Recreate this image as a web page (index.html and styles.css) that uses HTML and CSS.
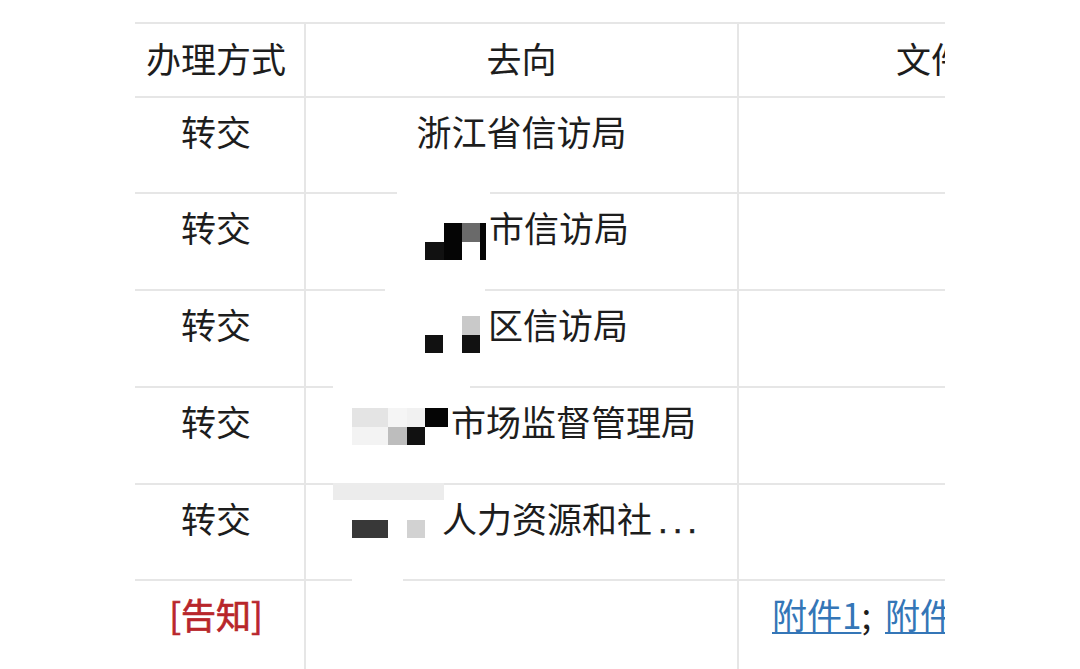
FILE: index.html
```html
<!DOCTYPE html>
<html lang="zh-CN">
<head>
<meta charset="utf-8">
<title>办理情况</title>
<link rel="stylesheet" href="styles.css">
</head>
<body>
<div class="page">
  <div class="table">
    <div class="cell c1 head">办理方式</div>
    <div class="cell c2 head">去向</div>
    <div class="cell c3 head">文件</div>

    <div class="cell c1">转交</div>
    <div class="cell c2">浙江省信访局</div>
    <div class="cell c3"></div>

    <div class="cell c1">转交</div>
    <div class="cell c2"><span class="gap g2"></span><span class="mosaic m2"><span class="px w19"></span><span class="px w18 k0"></span><span class="px w18 k6"></span><span class="px w6 k0"></span><span class="px w19 k1"></span><span class="px w18 k0"></span><span class="px w18"></span><span class="px w6 k0"></span></span>市信访局</div>
    <div class="cell c3"></div>

    <div class="cell c1">转交</div>
    <div class="cell c2"><span class="gap g3"></span><span class="mosaic m3"><span class="px w18"></span><span class="px w19"></span><span class="px w18 kc"></span><span class="px w18 k1"></span><span class="px w19"></span><span class="px w18 k1"></span></span>区信访局</div>
    <div class="cell c3"></div>

    <div class="cell c1">转交</div>
    <div class="cell c2"><span class="gap g4"></span><span class="mosaic m4"><span class="px w36 ke4"></span><span class="px w19 kf4"></span><span class="px w18 kf0"></span><span class="px w23 k0"></span><span class="px w36 kf3"></span><span class="px w19 kbd"></span><span class="px w18 k1"></span><span class="px w23"></span></span>市场监督管理局</div>
    <div class="cell c3"></div>

    <div class="cell c1">转交</div>
    <div class="cell c2"><span class="mosaic m5"><span class="px w111 kec h17"></span><span class="px w111 h20"></span><span class="px w19 h18"></span><span class="px w36 k3 h18"></span><span class="px w19 h18"></span><span class="px w18 kd2 h18"></span><span class="px w19 h18"></span></span>人力资源和社<span class="ell">...</span></div>
    <div class="cell c3"></div>

    <div class="cell c1 notice">[告知]</div>
    <div class="cell c2"><span class="gap g6"></span></div>
    <div class="cell c3 files"><a class="link" href="#">附件1</a><span class="sep">; </span><a class="link" href="#">附件2</a></div>
  </div>
</div>
</body>
</html>
```

FILE: styles.css
```css
html, body {
  margin: 0;
  background: #ffffff;
}

body {
  font-family: "Noto Sans CJK SC", "Noto Sans", sans-serif;
  color: #1d1d1d;
  height: 669px;
  overflow: hidden;
}

.page {
  padding-top: 22px;
  padding-left: 135px;
}

.table {
  width: 810px;
  overflow: hidden;
  display: grid;
  grid-template-columns: 169px 433px 386px;
  grid-template-rows: 74px 96px 97px 97px 97px 96px 120px;
}

.cell {
  box-sizing: border-box;
  border-top: 2px solid #e6e6e6;
  font-size: 35px;
  line-height: 40px;
  padding-top: 13px;
  text-align: center;
  white-space: nowrap;
  position: relative;
}

.c2, .c3 {
  border-left: 2px solid #e6e6e6;
}

.c1 {
  padding-right: 7px;
}

.head {
  display: flex;
  align-items: center;
  justify-content: center;
  padding-top: 0;
  padding-bottom: 5px;
}

.c1.head {
  padding-right: 7px;
}

.notice {
  color: #b8262b;
  -webkit-text-stroke: 0.7px #b8262b;
}

.ell {
  font-family: "Liberation Sans", sans-serif;
  letter-spacing: 5px;
  padding-left: 6px;
  -webkit-text-stroke: 0.5px #1d1d1d;
}

.files {
  text-align: left;
  padding-left: 33px;
}

.link {
  color: #3476b7;
  text-decoration: underline;
  text-decoration-thickness: 2px;
  text-underline-offset: 3px;
}

.sep {
  color: #1d1d1d;
  margin-right: 6px;
}

/* pixelated mosaic (redacted place names) */
.mosaic {
  display: inline-block;
  overflow: hidden;
  line-height: 0;
  white-space: normal;
  font-size: 0;
}

.px {
  display: inline-block;
  height: 18.5px;
  vertical-align: top;
}

.m2 { width: 61px; margin-left: 11px; margin-right: 3px; vertical-align: -18px; }
.m3 { width: 55px; margin-left: 10px; margin-right: 8px; vertical-align: -14px; }
.m4 { width: 96px; margin-left: 5px; margin-right: 3px; vertical-align: -9px; }
.m5 { width: 111px; margin-left: -8px; margin-right: -2px; margin-top: -16px; vertical-align: -5px; }

.w6 { width: 6px; }
.w18 { width: 18px; }
.w19 { width: 19px; }
.w23 { width: 23px; }
.w36 { width: 36px; }
.w111 { width: 111px; }

.h17 { height: 17px; }
.h18 { height: 18px; }
.h20 { height: 20px; }

.k0 { background: #050505; }
.k1 { background: #111111; }
.k3 { background: #383838; }
.k6 { background: #6a6a6a; }
.kbd { background: #bdbdbd; }
.kc { background: #c9c9c9; }
.kd2 { background: #d2d2d2; }
.ke4 { background: #e4e4e4; }
.kec { background: #ececec; }
.kf0 { background: #f1f1f1; }
.kf3 { background: #f3f3f3; }
.kf4 { background: #f5f5f5; }

/* blurred-out stretches of the row rules next to the redactions */
.gap {
  position: absolute;
  top: -2px;
  height: 2px;
  background: #ffffff;
}

.g2 { left: 91px; width: 93px; }
.g3 { left: 79px; width: 100px; }
.g4 { left: 27px; width: 137px; }
.g6 { left: 46px; width: 51px; }
```
